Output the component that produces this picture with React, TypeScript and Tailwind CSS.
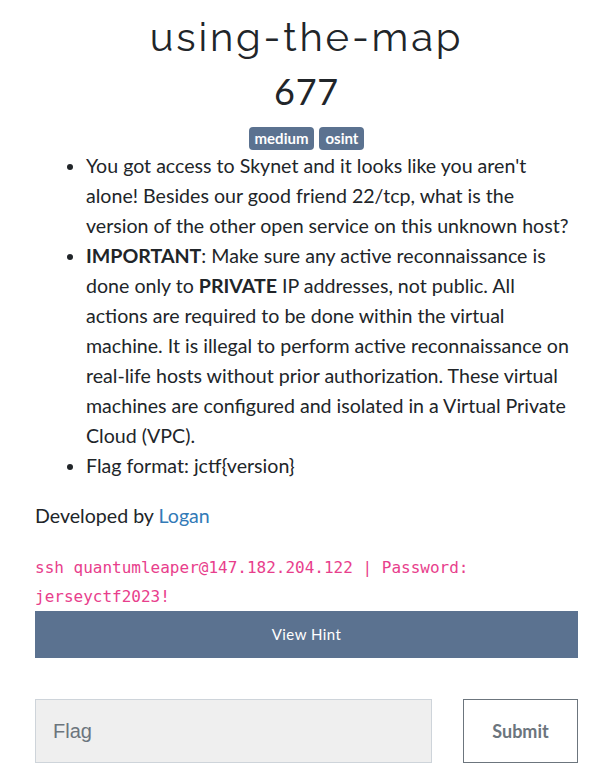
export default function App() {
  return (
    <div className="min-h-screen bg-white px-[35px] text-[#212529] font-['Lato','Noto_Sans',sans-serif]">
      <h1 className="pt-[13px] text-center text-[40px] leading-[48px] font-normal tracking-[0.07em] text-[#212529] font-['Raleway','Lato',sans-serif]">
        using-the-map
      </h1>
      <h2 className="mt-[8px] text-center text-[36px] leading-[44px] font-normal tracking-[0.02em]">677</h2>
      <div className="mt-[14px] flex justify-center gap-[5px]">
        <span className="rounded-[4px] bg-[#5b7290] px-[6px] text-[15px] font-bold leading-[23px] text-white">medium</span>
        <span className="rounded-[4px] bg-[#5b7290] px-[6px] text-[15px] font-bold leading-[23px] text-white">osint</span>
      </div>
      <ul className="mt-[1px] list-disc pl-[51px] text-[19.6px] leading-[30px]">
        <li>
          You got access to Skynet and it looks like you aren't alone! Besides our good friend 22/tcp, what is the
          version of the other open service on this unknown host?
        </li>
        <li>
          <strong className="font-bold">IMPORTANT</strong>: Make sure any active reconnaissance is done only to{' '}
          <strong className="font-bold">PRIVATE</strong> IP addresses, not public. All actions are required to be done
          within the virtual machine. It is illegal to perform active reconnaissance on real-life hosts without prior
          authorization. These virtual machines are configured and isolated in a Virtual Private Cloud (VPC).
        </li>
        <li>Flag format: jctf{'{'}version{'}'}</li>
      </ul>
      <p className="mt-[20px] text-[19.6px] leading-[30px]">
        Developed by <a className="text-[#337ab7]">Logan</a>
      </p>
      <p className="mt-[22px] text-[16px] leading-[29px] text-[#e83e8c] font-['DejaVu_Sans_Mono',monospace]">
        ssh quantumleaper@147.182.204.122 | Password: jerseyctf2023!
      </p>
      <button className="block h-[47px] w-full bg-[#5b7290] text-[15px] tracking-[0.03em] text-white">View Hint</button>
      <div className="mt-[41px] flex items-stretch justify-between">
        <input
          placeholder="Flag"
          className="h-[64px] w-[397px] border border-[#ced4da] bg-[#efefef] px-[17px] text-[20px] text-[#495057] placeholder:text-[#6c757d] font-['Liberation_Sans',Arial,sans-serif] outline-none"
        />
        <button className="h-[64px] w-[115px] border border-[#6c757d] bg-white text-[18px] font-bold text-[#6c757d] font-['Lato',sans-serif]">
          Submit
        </button>
      </div>
    </div>
  );
}
